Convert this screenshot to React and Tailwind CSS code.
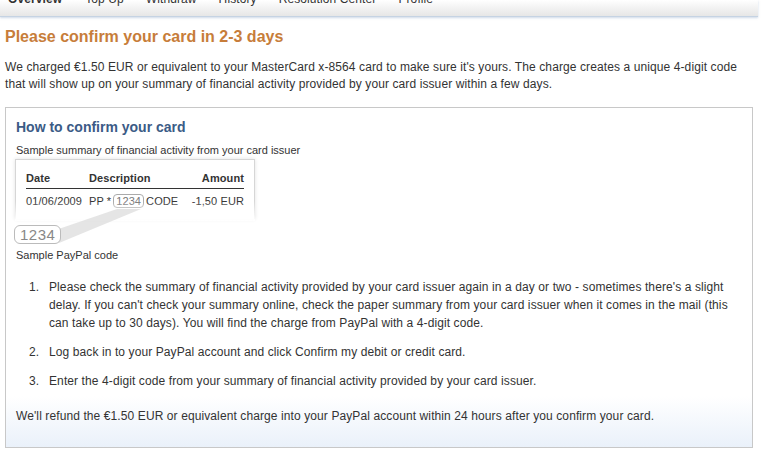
import React from 'react';

const tabs = ['Overview', 'Top Up', 'Withdraw', 'History', 'Resolution Center', 'Profile'];

const steps = [
    "Please check the summary of financial activity provided by your card issuer again in a day or two - sometimes there's a slight delay. If you can't check your summary online, check the paper summary from your card issuer when it comes in the mail (this can take up to 30 days). You will find the charge from PayPal with a 4-digit code.",
    'Log back in to your PayPal account and click Confirm my debit or credit card.',
    'Enter the 4-digit code from your summary of financial activity provided by your card issuer.',
];

const SampleStatement = () => (
    <div className="relative w-[250px] h-[92px]">
        {/* card with fading shadow */}
        <div className="w-[240px] h-[60px] border border-b-0 border-[#d6d6d6] bg-white shadow-[0_0_4px_rgba(0,0,0,0.12)] px-[10px] pt-[12px] text-[11px] text-[#333]">
            <div className="flex font-bold border-b border-[#333] pb-[3px] leading-[13px]">
                <span className="w-[63px]">Date</span>
                <span className="flex-1">Description</span>
                <span>Amount</span>
            </div>
            <div className="flex items-center pt-[5px] leading-[13px]">
                <span className="w-[63px]">01/06/2009</span>
                <span className="flex-1 flex items-center">
                    PP *
                    <span className="ml-[2px] mr-[2px] px-[2px] border border-[#aaa] rounded-[4px] text-[#777] leading-[12px]">1234</span>
                    CODE
                </span>
                <span>-1,50 EUR</span>
            </div>
        </div>
        <div className="absolute left-0 top-[42px] w-[240px] h-[20px] bg-gradient-to-b from-transparent to-white" />
        <svg className="absolute left-0 top-0" width="250" height="92">
            <polygon points="102,50 126,50 44,84 26,76" fill="#dcdcdc" opacity="0.75" />
        </svg>
        <div className="absolute -left-[1px] top-[66px] px-[5px] border border-[#bbb] rounded-[6px] bg-white text-[15px] leading-[17px] text-[#888] tracking-[0.5px]">
            1234
        </div>
    </div>
);

const App = () => {
    return (
        <div className="w-[767px] h-[458px] overflow-hidden bg-white font-['Liberation_Sans',Arial,sans-serif] text-[#333] tracking-[0.1px]">
            {/* Tabs, scrolled partly out of view */}
            <div className="w-[758px] h-[17px] overflow-hidden bg-gradient-to-b from-white to-[#e6e6e6] border-b border-[#c5d3e3] shadow-[0_1px_2px_rgba(160,180,210,0.5)]">
                <div className="flex -mt-[8px] pl-[8px] text-[12px] leading-[15px] text-[#333]">
                    {tabs.map((t, i) => (
                        <span key={t} className={i === 0 ? 'font-bold mr-[23px]' : 'mr-[22px]'}>
                            {t}
                        </span>
                    ))}
                </div>
            </div>

            <div className="pl-[5px] pr-[14px]">
                <h1 className="mt-[10px] text-[16px] leading-[20px] font-bold text-[#c77d3a] tracking-normal">
                    Please confirm your card in 2-3 days
                </h1>
                <p className="mt-[12px] text-[12px] leading-[17px]">
                    We charged €1.50 EUR or equivalent to your MasterCard x-8564 card to make sure it's yours. The charge creates a unique 4-digit code that will show up on your summary of financial activity provided by your card issuer within a few days.
                </p>

                <div className="mt-[14px] w-[748px] h-[341px] border border-[#c8c8c8] bg-gradient-to-b from-white from-[85%] to-[#eaf1fa] pl-[10px] pr-[20px]">
                    <h2 className="mt-[10px] text-[14px] leading-[18px] font-bold text-[#3b5b86] tracking-normal">How to confirm your card</h2>
                    <p className="mt-[8px] text-[11px] leading-[13px] tracking-normal">Sample summary of financial activity from your card issuer</p>
                    <div className="-ml-[1px] mt-[2px]">
                        <SampleStatement />
                    </div>
                    <p className="-mt-[2px] text-[11px] leading-[13px] tracking-normal">Sample PayPal code</p>

                    <ol className="mt-[16px] text-[12px] leading-[18px]">
                        {steps.map((s, i) => (
                            <li key={s} className="flex mb-[11px]">
                                <span className="shrink-0 w-[33px] pl-[13px]">{i + 1}.</span>
                                <span>{s}</span>
                            </li>
                        ))}
                    </ol>
                    <p className="mt-[17px] text-[12px] leading-[18px]">
                        We'll refund the €1.50 EUR or equivalent charge into your PayPal account within 24 hours after you confirm your card.
                    </p>
                </div>
            </div>
        </div>
    );
};

export default App;
